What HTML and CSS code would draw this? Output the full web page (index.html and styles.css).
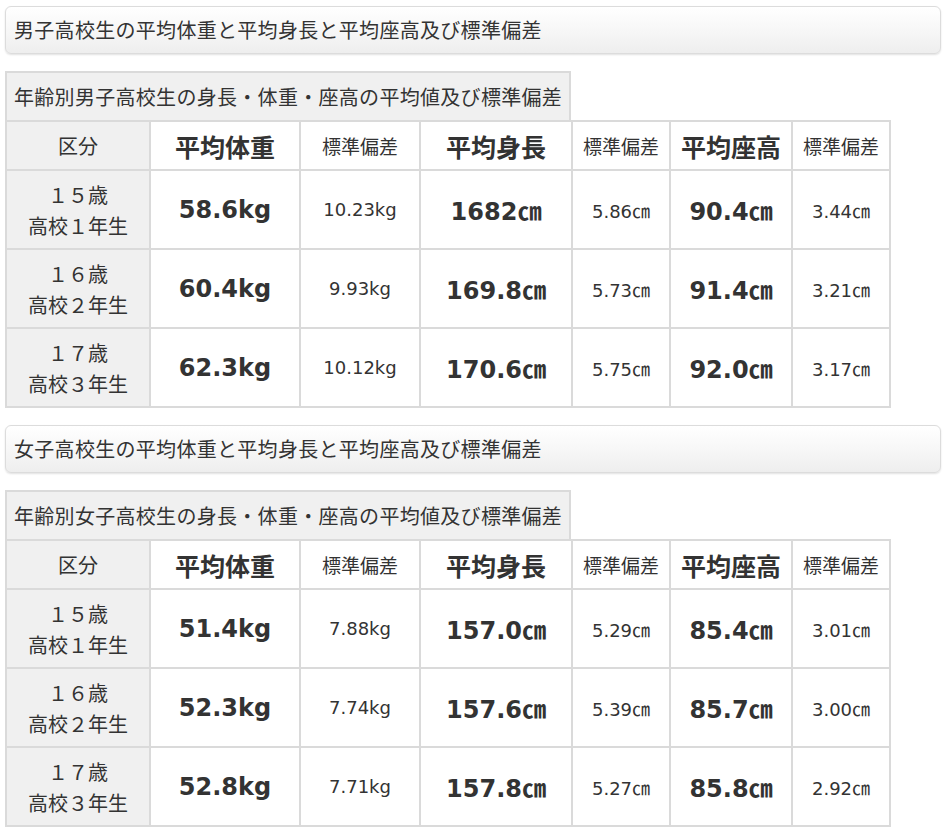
FILE: index.html
```html
<!DOCTYPE html>
<html lang="ja">
<head>
<meta charset="utf-8">
<title>高校生の平均体重・身長・座高</title>
<link rel="stylesheet" href="styles.css">
</head>
<body>
<div class="page">
  <h2 class="sec-title">男子高校生の平均体重と平均身長と平均座高及び標準偏差</h2>
  <div class="caption">年齢別男子高校生の身長・体重・座高の平均値及び標準偏差</div>
  <table class="data">
    <colgroup>
      <col class="c1"><col class="c2"><col class="c3"><col class="c4"><col class="c5"><col class="c6"><col class="c7">
    </colgroup>
    <tr class="head">
      <th class="label">区分</th>
      <th class="big">平均体重</th>
      <th class="small">標準偏差</th>
      <th class="big">平均身長</th>
      <th class="small">標準偏差</th>
      <th class="big">平均座高</th>
      <th class="small">標準偏差</th>
    </tr>
    <tr>
      <td class="label">１５歳<br>高校１年生</td>
      <td class="big">58.6kg</td>
      <td class="small">10.23kg</td>
      <td class="big">1682㎝</td>
      <td class="small">5.86㎝</td>
      <td class="big">90.4㎝</td>
      <td class="small">3.44㎝</td>
    </tr>
    <tr>
      <td class="label">１６歳<br>高校２年生</td>
      <td class="big">60.4kg</td>
      <td class="small">9.93kg</td>
      <td class="big">169.8㎝</td>
      <td class="small">5.73㎝</td>
      <td class="big">91.4㎝</td>
      <td class="small">3.21㎝</td>
    </tr>
    <tr>
      <td class="label">１７歳<br>高校３年生</td>
      <td class="big">62.3kg</td>
      <td class="small">10.12kg</td>
      <td class="big">170.6㎝</td>
      <td class="small">5.75㎝</td>
      <td class="big">92.0㎝</td>
      <td class="small">3.17㎝</td>
    </tr>
  </table>

  <h2 class="sec-title">女子高校生の平均体重と平均身長と平均座高及び標準偏差</h2>
  <div class="caption">年齢別女子高校生の身長・体重・座高の平均値及び標準偏差</div>
  <table class="data">
    <colgroup>
      <col class="c1"><col class="c2"><col class="c3"><col class="c4"><col class="c5"><col class="c6"><col class="c7">
    </colgroup>
    <tr class="head">
      <th class="label">区分</th>
      <th class="big">平均体重</th>
      <th class="small">標準偏差</th>
      <th class="big">平均身長</th>
      <th class="small">標準偏差</th>
      <th class="big">平均座高</th>
      <th class="small">標準偏差</th>
    </tr>
    <tr>
      <td class="label">１５歳<br>高校１年生</td>
      <td class="big">51.4kg</td>
      <td class="small">7.88kg</td>
      <td class="big">157.0㎝</td>
      <td class="small">5.29㎝</td>
      <td class="big">85.4㎝</td>
      <td class="small">3.01㎝</td>
    </tr>
    <tr>
      <td class="label">１６歳<br>高校２年生</td>
      <td class="big">52.3kg</td>
      <td class="small">7.74kg</td>
      <td class="big">157.6㎝</td>
      <td class="small">5.39㎝</td>
      <td class="big">85.7㎝</td>
      <td class="small">3.00㎝</td>
    </tr>
    <tr>
      <td class="label">１７歳<br>高校３年生</td>
      <td class="big">52.8kg</td>
      <td class="small">7.71kg</td>
      <td class="big">157.8㎝</td>
      <td class="small">5.27㎝</td>
      <td class="big">85.8㎝</td>
      <td class="small">2.92㎝</td>
    </tr>
  </table>
</div>
</body>
</html>
```

FILE: styles.css
```css
html, body {
  margin: 0;
  padding: 0;
  background: #ffffff;
}

body {
  font-family: "DejaVu Sans", "Noto Sans CJK JP", sans-serif;
  color: #333333;
}

.page {
  padding: 6px 2px 0 5px;
}

.sec-title {
  margin: 0 0 17px 0;
  height: 48px;
  box-sizing: border-box;
  border: 1px solid #dcdcdc;
  border-radius: 6px;
  background: linear-gradient(to bottom, #ffffff 0%, #f7f7f7 50%, #eeeeee 100%);
  box-shadow: 0 1px 2px rgba(0, 0, 0, 0.12);
  padding: 0 8px;
  font-family: "Noto Sans CJK JP", sans-serif;
  font-size: 20px;
  font-weight: normal;
  line-height: 46px;
  color: #333333;
  letter-spacing: 0.3px;
}

.caption {
  width: 566px;
  height: 49px;
  box-sizing: border-box;
  background: #f0f0f0;
  border: 2px solid #dadada;
  border-bottom: none;
  padding: 0 7px;
  font-family: "Noto Sans CJK JP", sans-serif;
  font-size: 20px;
  line-height: 47px;
  letter-spacing: 0.3px;
  white-space: nowrap;
}

.data {
  border-collapse: collapse;
  table-layout: fixed;
  width: 884px;
  margin-bottom: 17px;
}

.c1 { width: 144px; }
.c2 { width: 150px; }
.c3 { width: 120px; }
.c4 { width: 152px; }
.c5 { width: 98px; }
.c6 { width: 122px; }
.c7 { width: 98px; }

.data th,
.data td {
  border: 2px solid #dadada;
  background: #ffffff;
  text-align: center;
  vertical-align: middle;
  padding: 0;
  color: #333333;
}

.data tr.head th {
  height: 47px;
}

.data td {
  height: 77px;
}

.data .label {
  background: #f0f0f0;
  font-family: "Noto Sans CJK JP", sans-serif;
  font-weight: normal;
  font-size: 20px;
  line-height: 31px;
}

.data th.big {
  font-family: "Noto Sans CJK JP", sans-serif;
  font-size: 25px;
  font-weight: bold;
}

.data th.small {
  font-family: "Noto Sans CJK JP", sans-serif;
  font-size: 19px;
  font-weight: normal;
}

.data td.big {
  font-size: 24px;
  font-weight: bold;
}

.data td.small {
  font-size: 18px;
  font-weight: normal;
}
```
